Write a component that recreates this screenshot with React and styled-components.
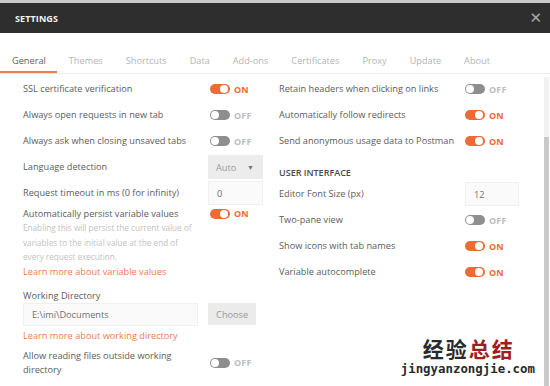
import React from 'react';
import styled, { createGlobalStyle } from 'styled-components';

const GlobalStyle = createGlobalStyle`
  html, body {
    margin: 0;
    padding: 0;
    background: #ffffff;
  }
  body {
    font-family: "Open Sans", "Noto Sans", sans-serif;
  }
`;

const Window = styled.div`
  position: relative;
  width: 550px;
  height: 386px;
  overflow: hidden;
  background: #ffffff;
  border-top: 3px solid #c9c9c9;
  box-sizing: border-box;
  display: flex;
  flex-direction: column;
`;

const Header = styled.div`
  height: 30px;
  flex: none;
  background: #2e2e2e;
  display: flex;
  align-items: center;
  justify-content: space-between;
  padding: 0 8px 0 15px;
`;

const Title = styled.div`
  color: #f2f2f2;
  font-size: 9px;
  font-weight: 700;
  letter-spacing: 0.1px;
`;

const Close = styled.div`
  color: #a8a8a8;
  font-size: 15px;
  line-height: 1;
  font-family: "DejaVu Sans", sans-serif;
`;

const TabBar = styled.div`
  display: flex;
  flex: none;
  margin-top: 18px;
  height: 22px;
  border-bottom: 1px solid #ececec;
`;

const Tab = styled.div`
  padding: 1px 11.5px 0 ${p => (p.$first ? 12 : 11.5)}px;
  font-size: 9.2px;
  line-height: 17px;
  color: ${p => (p.$active ? '#606060' : '#b4b4b4')};
  border-bottom: 2px solid ${p => (p.$active ? '#ef7b4e' : 'transparent')};
`;

const Body = styled.div`
  flex: 1;
  display: flex;
`;

const Columns = styled.div`
  flex: 1;
  display: grid;
  grid-template-columns: 256px 1fr;
  padding-top: 2px;
`;

const Column = styled.div`
  padding-left: 23px;
  display: flex;
  flex-direction: column;
`;

const Row = styled.div`
  display: grid;
  grid-template-columns: ${p => p.$label}px auto;
  align-items: center;
  height: 26px;
`;

const Label = styled.div`
  font-size: 9.2px;
  color: #5c5c5c;
  line-height: 14px;
`;

const Toggle = styled.div`
  display: flex;
  align-items: center;
  gap: 4px;
  margin-left: 2px;
`;

const Track = styled.div`
  position: relative;
  width: 20px;
  height: 10px;
  border-radius: 5px;
  background: ${p => (p.$on ? '#ef6a34' : '#8e8e8e')};
  &::after {
    content: '';
    position: absolute;
    top: 1px;
    left: ${p => (p.$on ? '10px' : '1px')};
    width: 8px;
    height: 8px;
    border-radius: 50%;
    background: #ffffff;
  }
`;

const State = styled.span`
  font-size: 9px;
  font-weight: 700;
  color: ${p => (p.$on ? '#ef6a34' : '#bdbdbd')};
  letter-spacing: 0.2px;
`;

const Select = styled.div`
  width: 55px;
  height: 24px;
  box-sizing: border-box;
  background: #ececec;
  display: flex;
  align-items: center;
  justify-content: space-between;
  padding: 0 9px 0 8px;
  font-size: 9.2px;
  color: #9a9a9a;
`;

const Caret = styled.span`
  font-size: 7px;
  color: #777;
`;

const Field = styled.div`
  width: ${p => p.$w}px;
  height: ${p => p.$h || 24}px;
  box-sizing: border-box;
  background: #fafafa;
  border: 1px solid #f0f0f0;
  display: flex;
  align-items: center;
  padding-left: 8px;
  font-size: 9.2px;
  color: #707070;
`;

const Help = styled.div`
  font-size: 8.2px;
  line-height: 14.5px;
  color: #c2c2c2;
  width: 175px;
`;

const Link = styled.div`
  font-size: 9.2px;
  line-height: 14px;
  color: #ef7b4e;
  margin-top: ${p => p.$mt || 0}px;
`;

const PersistRow = styled.div`
  display: grid;
  grid-template-columns: 185px auto;
  align-items: start;
  margin-top: 1px;
`;

const DirLabel = styled(Label)`
  margin-top: 10px;
`;

const DirRow = styled.div`
  display: flex;
  align-items: center;
  gap: 10px;
`;

const Button = styled.div`
  width: 48px;
  height: 22px;
  background: #ebebeb;
  display: flex;
  align-items: center;
  justify-content: center;
  font-size: 9.2px;
  color: #9a9a9a;
`;

const AllowRow = styled.div`
  display: grid;
  grid-template-columns: 185px auto;
  align-items: center;
  margin-top: 6px;
`;

const Heading = styled.div`
  font-size: 9px;
  font-weight: 600;
  color: #4a4a4a;
  margin-top: 11px;
  line-height: 16px;
`;

const Scrollbar = styled.div`
  width: 5px;
  margin-right: 1px;
  background: #f1f1f1;
  display: flex;
  flex-direction: column;
  margin-top: 3px;
`;

const Thumb = styled.div`
  margin-top: 60px;
  flex: 1;
  background: #c9c9c9;
`;

const Watermark = styled.div`
  position: absolute;
  right: 15px;
  bottom: 11px;
  display: flex;
  flex-direction: column;
  align-items: center;
`;

const MarkTitle = styled.div`
  font-family: "Noto Sans CJK SC", sans-serif;
  font-size: 21px;
  font-weight: 700;
  line-height: 21px;
  letter-spacing: 2px;
  margin-right: -2px;
  color: #2a2a2a;
`;

const MarkRed = styled.span`
  color: #9c1e1e;
`;

const MarkUrl = styled.div`
  font-family: "DejaVu Sans Mono", monospace;
  font-size: 12.4px;
  font-weight: 700;
  color: #2a2a2a;
  line-height: 13px;
  margin-top: 3px;
`;

const tabs = ['General', 'Themes', 'Shortcuts', 'Data', 'Add-ons', 'Certificates', 'Proxy', 'Update', 'About'];

const Switch = ({ on }) => (
  <Toggle>
    <Track $on={on} />
    <State $on={on}>{on ? 'ON' : 'OFF'}</State>
  </Toggle>
);

const ToggleRow = ({ label, on, width }) => (
  <Row $label={width}>
    <Label>{label}</Label>
    <Switch on={on} />
  </Row>
);

export default function App() {
  return (
    <>
      <GlobalStyle />
      <Window>
        <Header>
          <Title>SETTINGS</Title>
          <Close>✕</Close>
        </Header>
        <TabBar>
          {tabs.map((name, i) => (
            <Tab key={name} $active={i === 0} $first={i === 0}>
              {name}
            </Tab>
          ))}
        </TabBar>
        <Body>
          <Columns>
            <Column>
              <ToggleRow label="SSL certificate verification" on width={185} />
              <ToggleRow label="Always open requests in new tab" width={185} />
              <ToggleRow label="Always ask when closing unsaved tabs" width={185} />
              <Row $label={185}>
                <Label>Language detection</Label>
                <Select>
                  Auto <Caret>▼</Caret>
                </Select>
              </Row>
              <Row $label={185}>
                <Label>Request timeout in ms (0 for infinity)</Label>
                <Field $w={55}>0</Field>
              </Row>
              <PersistRow>
                <div>
                  <Label>Automatically persist variable values</Label>
                  <Help>
                    Enabling this will persist the current value of variables to the
                    initial value at the end of every request execution.
                  </Help>
                </div>
                <Switch on />
              </PersistRow>
              <Link>Learn more about variable values</Link>
              <DirLabel>Working Directory</DirLabel>
              <DirRow>
                <Field $w={176} $h={23}>E:\imi\Documents</Field>
                <Button>Choose</Button>
              </DirRow>
              <Link $mt={3}>Learn more about working directory</Link>
              <AllowRow>
                <Label>
                  Allow reading files outside working
                  <br />
                  directory
                </Label>
                <Switch />
              </AllowRow>
            </Column>
            <Column>
              <ToggleRow label="Retain headers when clicking on links" width={184} />
              <ToggleRow label="Automatically follow redirects" on width={184} />
              <ToggleRow label="Send anonymous usage data to Postman" on width={184} />
              <Heading>USER INTERFACE</Heading>
              <Row $label={186}>
                <Label>Editor Font Size (px)</Label>
                <Field $w={54}>12</Field>
              </Row>
              <ToggleRow label="Two-pane view" width={184} />
              <ToggleRow label="Show icons with tab names" on width={184} />
              <ToggleRow label="Variable autocomplete" on width={184} />
            </Column>
          </Columns>
          <Scrollbar>
            <Thumb />
          </Scrollbar>
        </Body>
        <Watermark>
          <MarkTitle>
            经验<MarkRed>总结</MarkRed>
          </MarkTitle>
          <MarkUrl>jingyanzongjie.com</MarkUrl>
        </Watermark>
      </Window>
    </>
  );
}
